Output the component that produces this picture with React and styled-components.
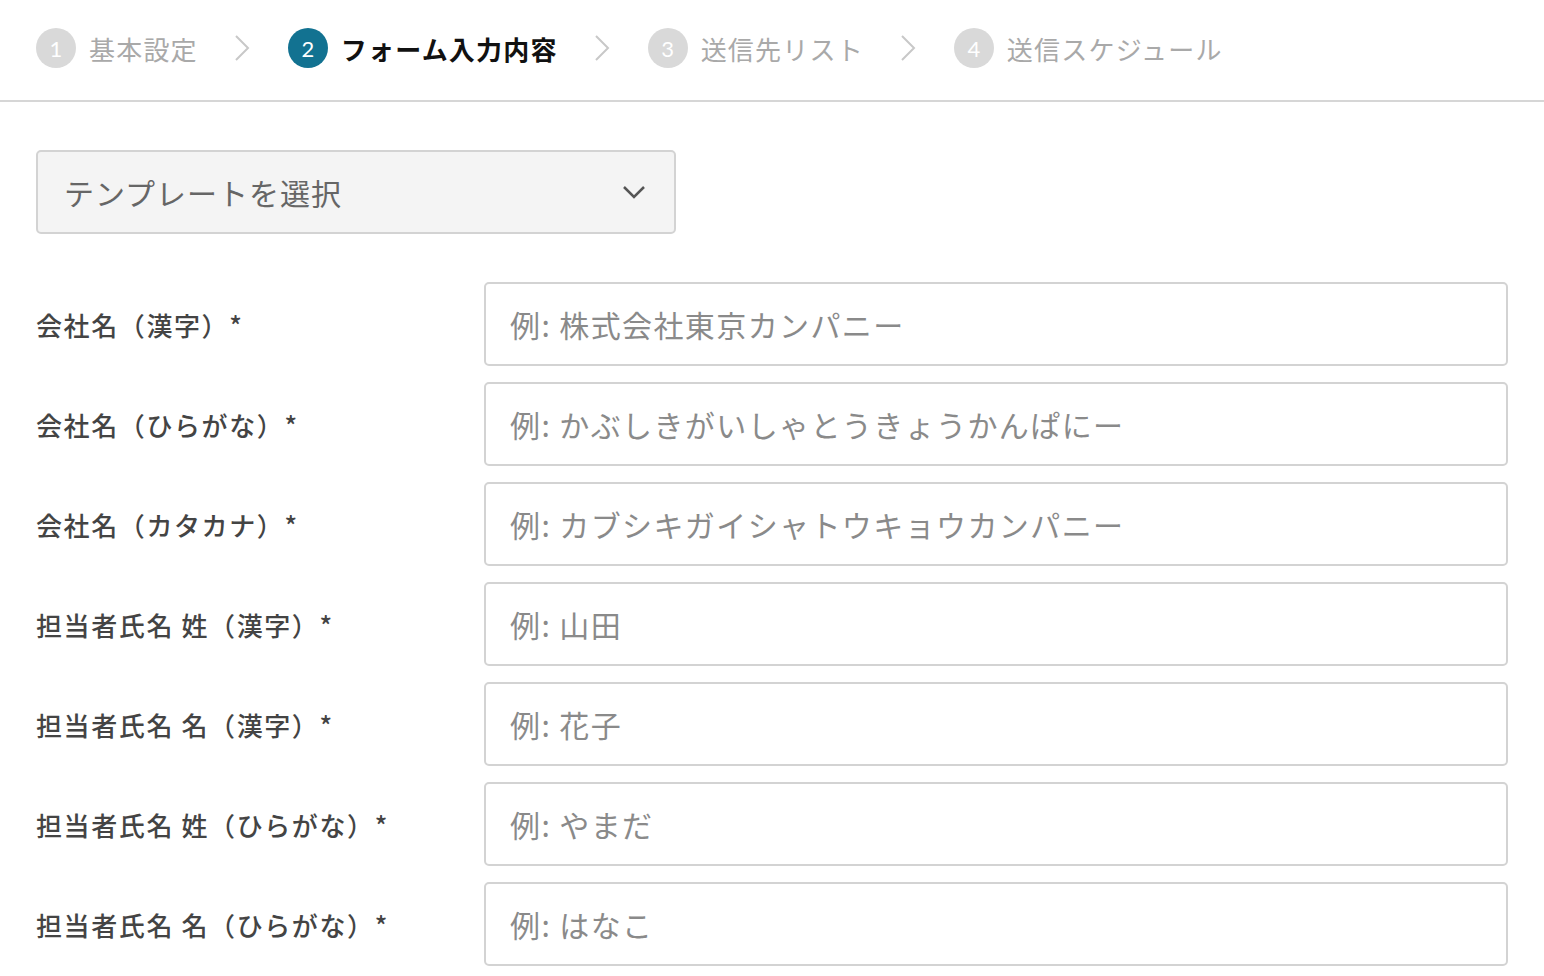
import React from "react";
import styled, { createGlobalStyle } from "styled-components";

const G = createGlobalStyle`
  body { margin: 0; background: #fff; font-family: "Noto Sans CJK JP", "Lato", sans-serif; }
`;
const Header = styled.div`
  height: 102px; border-bottom: 2px solid #d6d6d6; box-sizing: border-box;
  display: flex; align-items: center; padding: 0 36px 4px; gap: 0;
`;
const Step = styled.div`
  display: flex; align-items: center; gap: 13px; letter-spacing: 1.2px;
  font-size: 26px; color: ${p => p.$active ? "#111" : "#a9a9a9"};
  font-weight: ${p => p.$active ? 700 : 400};
`;
const Num = styled.span`
  width: 40px; height: 40px; border-radius: 50%; letter-spacing: 0;
  background: ${p => p.$active ? "#127291" : "#d9d9d9"};
  color: #fff; display: flex; align-items: center; justify-content: center;
  font-family: "Lato", sans-serif; font-size: 22px; font-weight: 400;
`;
const Chev = styled.svg` margin: 0 38px 0 36px; `;
const Body = styled.div` padding: 48px 36px 0; `;
const Select = styled.div`
  width: 640px; height: 84px; box-sizing: border-box; border: 2px solid #d3d3d3; border-radius: 5px;
  background: #f4f4f4; display: flex; align-items: center; justify-content: space-between;
  padding: 0 28px 0 26px; font-size: 30px; color: #666; margin-bottom: 48px; letter-spacing: 1px;
`;
const Row = styled.div`
  display: flex; align-items: center; height: 84px; margin-bottom: 16px;
`;
const Label = styled.div` width: 448px; font-size: 26px; color: #444; font-weight: 500; letter-spacing: 1.6px; `;
const Input = styled.div`
  flex: 1; height: 84px; box-sizing: border-box; border: 2px solid #d3d3d3; border-radius: 5px;
  display: flex; align-items: center; padding: 0 24px; font-size: 30px; color: #8a8a8a; letter-spacing: 1.4px;
`;
const steps = ["基本設定", "フォーム入力内容", "送信先リスト", "送信スケジュール"];
const rows = [
  ["会社名（漢字）*", "例: 株式会社東京カンパニー"],
  ["会社名（ひらがな）*", "例: かぶしきがいしゃとうきょうかんぱにー"],
  ["会社名（カタカナ）*", "例: カブシキガイシャトウキョウカンパニー"],
  ["担当者氏名 姓（漢字）*", "例: 山田"],
  ["担当者氏名 名（漢字）*", "例: 花子"],
  ["担当者氏名 姓（ひらがな）*", "例: やまだ"],
  ["担当者氏名 名（ひらがな）*", "例: はなこ"],
];
export default function App() {
  return (<>
    <G />
    <Header>
      {steps.map((s, i) => (
        <React.Fragment key={s}>
          <Step $active={i === 1}><Num $active={i === 1}>{i + 1}</Num>{s}</Step>
          {i < 3 && <Chev width="16" height="28" viewBox="0 0 16 28"><path d="M2 2l12 12L2 26" fill="none" stroke="#c8c8c8" strokeWidth="2" /></Chev>}
        </React.Fragment>
      ))}
    </Header>
    <Body>
      <Select>テンプレートを選択
        <svg width="24" height="14" viewBox="0 0 24 14"><path d="M2 2l10 10L22 2" fill="none" stroke="#555" strokeWidth="2.5" /></svg>
      </Select>
      {rows.map(([l, p]) => <Row key={l}><Label>{l}</Label><Input>{p}</Input></Row>)}
    </Body>
  </>);
}
